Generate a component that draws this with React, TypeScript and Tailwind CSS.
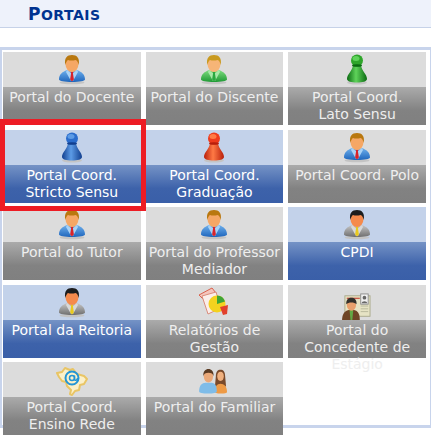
const font = "font-['Verdana','DejaVu_Sans',sans-serif]";

type PersonProps = {
  id: string;
  suitLight: string;
  suitDark: string;
  tie: string;
  hair: string;
  skin: string;
  collar?: string;
};

const Person = ({ id, suitLight, suitDark, tie, hair, skin, collar = "#a9d2f5" }: PersonProps) => (
  <svg width="28" height="31" viewBox="0 0 28 31">
    <defs>
      <linearGradient id={id} x1="0" y1="0" x2="0" y2="1">
        <stop offset="0" stopColor={suitLight} />
        <stop offset="1" stopColor={suitDark} />
      </linearGradient>
    </defs>
    <ellipse cx="14" cy="28.500" rx="12.500" ry="1.800" fill="#c4c4c4" />
    <path d="M1 25.500c0-5 3-7.500 8-9.500l5 2 5-2c5 2 8 4.500 8 9.500 0 1.500-6 2.500-13 2.500S1 27 1 25.500z" fill={`url(#${id})`} />
    <path d="M9 16l5 4 5-4 1 2-5 9h-2L8 18z" fill={collar} />
    <path d="M12.500 17.500h3l-.6 1.700 1 6.300-1.900 2-1.900-2 1-6.300z" fill={tie} />
    <ellipse cx="14" cy="10" rx="6.500" ry="8" fill={skin} />
    <path d="M7.300 11C6 4 9 1 14 1s8 3 6.700 10c-.7-3-1.700-4.500-3.200-5-3 1-6 .5-7.500 0-1.300 1-2 2.500-2.700 5z" fill={hair} />
  </svg>
);

const Pawn = ({ id, light, mid, dark }: { id: string; light: string; mid: string; dark: string }) => (
  <svg width="22" height="31" viewBox="0 0 22 31">
    <defs>
      <linearGradient id={id} x1="0" y1="0" x2="1" y2="0">
        <stop offset="0" stopColor={dark} />
        <stop offset="0.45" stopColor={light} />
        <stop offset="1" stopColor={dark} />
      </linearGradient>
    </defs>
    <ellipse cx="11" cy="28.500" rx="10" ry="2" fill="#c4c4c4" />
    <path d="M7 11C6.500 17 1 20 1 25c0 2.500 4.500 3.500 10 3.500S21 27.500 21 25c0-5-5.500-8-6-14z" fill={`url(#${id})`} />
    <ellipse cx="11" cy="6.500" rx="6" ry="6" fill={mid} />
    <ellipse cx="10" cy="4.500" rx="3.500" ry="2.500" fill={light} />
    <ellipse cx="11" cy="11.500" rx="5" ry="1.300" fill={dark} />
  </svg>
);

const Report = () => (
  <svg width="32" height="32" viewBox="0 0 32 32">
    <path d="M1 9l13-7 4 5-11 8z" fill="#f4c6bd" stroke="#d9604c" />
    <path d="M4 10l14-4 5 16-13 6z" fill="#fbeeea" stroke="#d98c7c" />
    <circle cx="19" cy="18" r="8.500" fill="#f4d21f" />
    <path d="M19 18V9.500a8.500 8.500 0 0 1 8 6z" fill="#3fa535" />
    <path d="M22 21l8-2-1 9-4 1z" fill="#e2402c" />
  </svg>
);

const Badge = () => (
  <svg width="30" height="27" viewBox="0 0 32 29" className="mt-[8px]">
    <rect x="3" y="3" width="27" height="22" fill="#e6e3c4" stroke="#a9a98c" />
    <rect x="5" y="5" width="14" height="1.500" fill="#c85a4a" />
    <rect x="20" y="1" width="8" height="11" fill="#f1f1f1" stroke="#8c8c8c" />
    <circle cx="24" cy="5" r="2" fill="#666" />
    <path d="M21 11c0-3 6-3 6 0z" fill="#666" />
    <path d="M20 14h8M20 17h8M20 20h8" stroke="#b7b79a" />
    <path d="M0 29c0-7 3-10 8-11h4c5 1 7 4 7 11z" fill="#6e4526" />
    <path d="M8 18h4l-1 11H9z" fill="#62a844" />
    <ellipse cx="10" cy="13" rx="5" ry="6" fill="#e8a06d" />
    <path d="M4.500 12C4 7 7 5 10 5s6 2 5.500 7C13 9.500 7 9.500 4.500 12z" fill="#33302b" />
  </svg>
);

const Brazil = () => (
  <svg width="32" height="32" viewBox="0 0 32 32">
    <path d="M1 9l5-1 3-4 5 2 3-1 4 5 7 2 3 3-3 5-4 1-1 5-4 1-3 4-2-1 1-4-4-4-1-4-4-1-3-4z" fill="#fbf0c9" stroke="#e9c565" strokeWidth="2" strokeLinejoin="round" />
    <circle cx="16" cy="14" r="6.500" fill="none" stroke="#2395d6" strokeWidth="2" />
    <circle cx="16" cy="14" r="2.500" fill="none" stroke="#2395d6" strokeWidth="1.500" />
    <path d="M18.500 11.500v3.500c0 2 3 1.500 3-1" fill="none" stroke="#2395d6" strokeWidth="1.500" />
  </svg>
);

const Family = () => (
  <svg width="30" height="26" viewBox="0 0 32 28" className="mt-[2px]">
    <path d="M18 9c0-5 2-7 5-7s5 2 5 7l1 11H17z" fill="#7a4a2a" />
    <ellipse cx="23" cy="9" rx="3.500" ry="5" fill="#f0b07e" />
    <path d="M17 26c0-6 2-9 6-9s7 3 7 9c0 1-3 1.500-6 1.500s-7-.5-7-1.500z" fill="#ee9a45" />
    <path d="M0 25c0-6 3-9 7-9h6c4 0 6 3 6 9 0 2-4 2.500-9.500 2.500S0 27 0 25z" fill="#7fbce8" />
    <ellipse cx="10" cy="9" rx="5" ry="6.500" fill="#eaa878" />
    <path d="M4.500 9C4 3 7 1 10 1s6 2 5.500 8C15 6 13 5 10 5S5 6 4.500 9z" fill="#5a3a22" />
  </svg>
);

type TileProps = {
  label: string;
  icon: React.ReactNode;
  active?: boolean;
};

const Tile = ({ label, icon, active }: TileProps) => (
  <div className={`flex min-w-0 flex-col ${active ? "bg-[#c3d2ea]" : "bg-[#dcdcdc]"}`}>
    <div className="flex h-[35px] shrink-0 items-center justify-center overflow-visible">
      {icon}
    </div>
    <div
      className={`h-[38px] shrink-0 pt-[2px] text-center text-[14px] leading-[17px] whitespace-pre-line ${
        active
          ? "bg-[linear-gradient(#7593c6,#3d62aa_62%,#3a5fa8)] text-white"
          : "bg-[linear-gradient(#ababab,#828282_62%,#808080)] text-[#eeeeee]"
      }`}
    >
      {label}
    </div>
  </div>
);

const suitBlue = { suitLight: "#6fb0ec", suitDark: "#1f66bd", tie: "#d8232a", hair: "#b9780f", skin: "#f5a765" };
const suitGray = { suitLight: "#c6c6c6", suitDark: "#6f6f6f", tie: "#e8c91e", hair: "#1d1d1d", skin: "#f58a4c", collar: "#d8d8d8" };

const App = () => {
  return (
    <div className={`relative h-[448px] w-full overflow-hidden bg-white ${font}`}>
      <div className="h-[28px] w-[431px] border-b border-[#c6d2e8] bg-[#eef2fb] pt-[4px] pl-[28px]">
        <h2 className="text-[17px] leading-[20px] font-bold tracking-[0.5px] text-[#003390]">
          P<span className="text-[14px] uppercase">ortais</span>
        </h2>
      </div>
      <div className="mt-[19px] h-[381px] w-[431px] border-t-[3px] border-r border-b-[3px] border-l-[2px] border-[#c8d4ec] pt-[2px] pl-[1px]">
        <div className="grid h-[383px] w-[423px] grid-cols-3 grid-rows-5 gap-[5px]">
          <Tile label="Portal do Docente" icon={<Person id="p1" {...suitBlue} />} />
          <Tile
            label="Portal do Discente"
            icon={<Person id="p2" suitLight="#7fdc7f" suitDark="#1f9a35" tie="#2aa83f" hair="#c99a1f" skin="#f6b577" collar="#a8e8a8" />}
          />
          <Tile
            label={"Portal Coord.\nLato Sensu"}
            icon={<Pawn id="g1" light="#5fd35a" mid="#2ea52a" dark="#0b6a12" />}
          />
          <Tile active label={"Portal Coord.\nStricto Sensu"} icon={<Pawn id="g2" light="#5c9be6" mid="#2a6ccc" dark="#123f8f" />} />
          <Tile active label={"Portal Coord.\nGraduação"} icon={<Pawn id="g3" light="#ff7a45" mid="#ee3a1c" dark="#b81f0c" />} />
          <Tile label="Portal Coord. Polo" icon={<Person id="p3" {...suitBlue} />} />
          <Tile label="Portal do Tutor" icon={<Person id="p4" {...suitBlue} />} />
          <Tile label={"Portal do Professor\nMediador"} icon={<Person id="p5" {...suitBlue} />} />
          <Tile active label="CPDI" icon={<Person id="p6" {...suitGray} />} />
          <Tile active label="Portal da Reitoria" icon={<Person id="p7" {...suitGray} />} />
          <Tile label={"Relatórios de\nGestão"} icon={<Report />} />
          <Tile label={"Portal do\nConcedente de\nEstágio"} icon={<Badge />} />
          <Tile label={"Portal Coord.\nEnsino Rede"} icon={<Brazil />} />
          <Tile label="Portal do Familiar" icon={<Family />} />
        </div>
      </div>
      <div className="absolute top-[119px] left-0 h-[92px] w-[146px] border-[5px] border-t-[6px] border-[#ed1c24]" />
    </div>
  );
};

export default App;
